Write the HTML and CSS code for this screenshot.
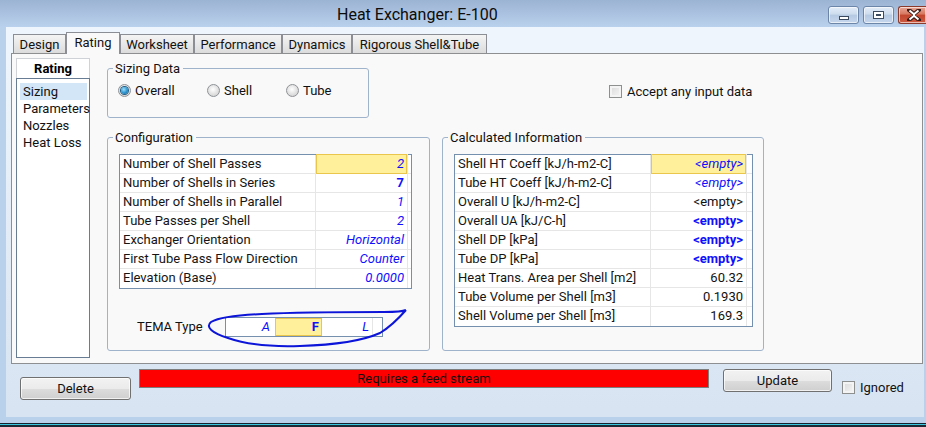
FILE: index.html
```html
<!DOCTYPE html>
<html>
<head>
<meta charset="utf-8">
<title>Heat Exchanger: E-100</title>
<link rel="stylesheet" href="styles.css">
</head>
<body>
<div class="window">
  <div class="titlebar">
    <div class="title">Heat Exchanger: E-100</div>
    <div class="controls">
      <div class="wbtn wmin"><span class="min-glyph"></span></div>
      <div class="wbtn wmax"><span class="max-glyph"></span></div>
      <div class="wbtn wclose">
        <svg width="14" height="12" viewBox="0 0 14 12"><path d="M2 1 L7 5 L12 1 M2 11 L7 7 L12 11 M7 5 L7 7" stroke="#3a1a14" stroke-width="4" fill="none" stroke-linecap="square"/><path d="M2.5 1.5 L7 5.3 L11.5 1.5 M2.5 10.5 L7 6.7 L11.5 10.5 M7 5 L7 7" stroke="#ffffff" stroke-width="2" fill="none"/></svg>
      </div>
    </div>
  </div>
  <div class="frame">
    <div class="client">
      <div class="tabs">
        <div class="tab t-design">Design</div>
        <div class="tab t-rating active">Rating</div>
        <div class="tab t-work">Worksheet</div>
        <div class="tab t-perf">Performance</div>
        <div class="tab t-dyn">Dynamics</div>
        <div class="tab t-rig">Rigorous Shell&amp;Tube</div>
      </div>
      <div class="panel">
        <div class="nav">
          <div class="nav-head">Rating</div>
          <div class="nav-list">
            <div class="nav-item active">Sizing</div>
            <div class="nav-item">Parameters</div>
            <div class="nav-item">Nozzles</div>
            <div class="nav-item">Heat Loss</div>
          </div>
        </div>
        <div class="main">
          <div class="row1">
            <fieldset class="group sizing">
              <legend>Sizing Data</legend>
              <div class="radios">
                <div class="radio r-overall"><span class="dot on"></span>Overall</div>
                <div class="radio r-shell"><span class="dot"></span>Shell</div>
                <div class="radio r-tube"><span class="dot"></span>Tube</div>
              </div>
            </fieldset>
            <div class="check accept"><span class="cbox"></span>Accept any input data</div>
          </div>
          <div class="row2">
            <fieldset class="group config">
              <legend>Configuration</legend>
              <div class="group-body">
                <div class="ptable cfg">
                  <div class="prow"><div class="lbl">Number of Shell Passes</div><div class="val sel it blue">2</div><div class="pad"></div></div>
                  <div class="prow"><div class="lbl">Number of Shells in Series</div><div class="val bold blue">7</div><div class="pad"></div></div>
                  <div class="prow"><div class="lbl">Number of Shells in Parallel</div><div class="val it blue">1</div><div class="pad"></div></div>
                  <div class="prow"><div class="lbl">Tube Passes per Shell</div><div class="val it blue">2</div><div class="pad"></div></div>
                  <div class="prow"><div class="lbl">Exchanger Orientation</div><div class="val it blue">Horizontal</div><div class="pad"></div></div>
                  <div class="prow"><div class="lbl">First Tube Pass Flow Direction</div><div class="val it blue">Counter</div><div class="pad"></div></div>
                  <div class="prow last"><div class="lbl">Elevation (Base)</div><div class="val it blue">0.0000</div><div class="pad"></div></div>
                </div>
                <div class="tema-row">
                  <div class="tema-label">TEMA Type</div>
                  <div class="tema-box">
                    <div class="tcell ta it blue">A</div>
                    <div class="tcell tf bold blue">F</div>
                    <div class="tcell tl it blue">L</div>
                    <div class="tcell tpad"></div>
                  </div>
                  <svg class="lasso" viewBox="200 304 215 48" width="215" height="48">
                    <path d="M406 310 C402 312 396 312 384 312 C350 312 300 312 262 314 C238 315 218 318 211 322 C205 327 212 333 228 338 C248 345 272 347 300 346 C335 345 362 341 380 333 C390 327 399 318 406 310" fill="none" stroke="#0b14d8" stroke-width="2" stroke-linejoin="round"/>
                  </svg>
                </div>
              </div>
            </fieldset>
            <fieldset class="group calc">
              <legend>Calculated Information</legend>
              <div class="group-body">
                <div class="ptable cal">
                  <div class="prow"><div class="lbl">Shell HT Coeff [kJ/h-m2-C]</div><div class="val sel it blue">&lt;empty&gt;</div><div class="pad"></div></div>
                  <div class="prow"><div class="lbl">Tube HT Coeff [kJ/h-m2-C]</div><div class="val it blue">&lt;empty&gt;</div><div class="pad"></div></div>
                  <div class="prow"><div class="lbl">Overall U [kJ/h-m2-C]</div><div class="val">&lt;empty&gt;</div><div class="pad"></div></div>
                  <div class="prow"><div class="lbl">Overall UA [kJ/C-h]</div><div class="val bold blue">&lt;empty&gt;</div><div class="pad"></div></div>
                  <div class="prow"><div class="lbl">Shell DP [kPa]</div><div class="val bold blue">&lt;empty&gt;</div><div class="pad"></div></div>
                  <div class="prow"><div class="lbl">Tube DP [kPa]</div><div class="val bold blue">&lt;empty&gt;</div><div class="pad"></div></div>
                  <div class="prow"><div class="lbl">Heat Trans. Area per Shell [m2]</div><div class="val">60.32</div><div class="pad"></div></div>
                  <div class="prow"><div class="lbl">Tube Volume per Shell [m3]</div><div class="val">0.1930</div><div class="pad"></div></div>
                  <div class="prow last"><div class="lbl">Shell Volume per Shell [m3]</div><div class="val">169.3</div><div class="pad"></div></div>
                </div>
              </div>
            </fieldset>
          </div>
        </div>
      </div>
      <div class="bottombar">
        <div class="btn delete">Delete</div>
        <div class="status">Requires a feed stream</div>
        <div class="btn update">Update</div>
        <div class="check ignored"><span class="cbox"></span>Ignored</div>
      </div>
    </div>
  </div>
  <div class="bottom-edge"></div>
</div>
</body>
</html>
```
FILE: styles.css
```css
* { box-sizing: border-box; }
html, body { margin: 0; padding: 0; }
body {
  width: 926px;
  height: 427px;
  overflow: hidden;
  background: #b9d1ea;
  font-family: Roboto, "Noto Sans", sans-serif;
  font-size: 13px;
  color: #111;
}
.window { display: flex; flex-direction: column; width: 926px; height: 427px; }

/* title bar */
.titlebar {
  height: 27px;
  flex: none;
  display: flex;
  align-items: flex-start;
  background: linear-gradient(#9cb4d3, #b9d1ec);
}
.title {
  padding-left: 337px;
  font-size: 16px;
  line-height: 30px;
  color: #0c0c0c;
  white-space: nowrap;
}
.controls { margin-left: auto; display: flex; gap: 4px; padding-top: 6px; }
.wbtn {
  width: 31px;
  height: 18px;
  border: 1px solid #6c86aa;
  border-radius: 3px;
  display: flex;
  align-items: center;
  justify-content: center;
  background: linear-gradient(#e4edf8 0%, #cddcee 45%, #b5c9e3 50%, #c6d7ec 100%);
  box-shadow: inset 0 0 0 1px rgba(255,255,255,0.6);
}
.min-glyph {
  width: 10px; height: 4px; margin-top: 5px;
  background: #fff; border: 1px solid #3b4a5e;
}
.max-glyph {
  width: 11px; height: 8px;
  border: 1px solid #3b4a5e;
  box-shadow: inset 0 0 0 2px #fff, inset 0 0 0 3px #3b4a5e;
  background: #c6d7ec;
}
.wclose {
  width: 28px;
  border-right: none;
  border-radius: 3px 0 0 3px;
  border-color: #8b3a2c;
  background: linear-gradient(#e7a698 0%, #d7775f 45%, #c2462e 50%, #cd5a40 100%);
  justify-content: flex-start;
  padding-left: 8px;
}

/* frame */
.frame { flex: none; height: 390px; display: flex; padding-left: 6px; }
.client {
  width: 918px;
  height: 390px;
  padding: 0 1px 0 5px;
  display: flex;
  flex-direction: column;
  background: linear-gradient(#eef5fc 0px, #eef5fc 30px, #d8e4f2 380px);
}
.bottom-edge {
  flex: 1;
  background: linear-gradient(#b9d1ea 0px, #b9d1ea 6px, #16232f 6px, #16232f 7px, #38c9e1 7px, #38c9e1 8px, #1c2a36 8px);
}

/* tabs */
.tabs { height: 26px; flex: none; display: flex; align-items: flex-end; padding-left: 2px; }
.tab {
  height: 19px;
  border: 1px solid #8b8e94;
  border-bottom: none;
  background: linear-gradient(#f4f4f4, #dcdcdc);
  text-align: center;
  line-height: 19px;
  white-space: nowrap;
  color: #111;
}
.tab.active {
  height: 22px;
  margin-bottom: -1px;
  position: relative;
  z-index: 1;
  background: #f9f9f9;
  line-height: 20px;
}
.t-design { width: 53px; }
.t-rating { width: 54px; }
.t-work { width: 74px; }
.t-perf { width: 88px; }
.t-dyn { width: 70px; }
.t-rig { width: 135px; }

/* panel */
.panel {
  height: 311px;
  flex: none;
  border: 1px solid #8e8f90;
  background: #f9f9f9;
  padding: 4px 0 0 4px;
  display: flex;
  align-items: flex-start;
}
.nav { width: 74px; height: 300px; display: flex; flex-direction: column; }
.nav-head {
  height: 20px;
  border: 1px solid #cfd3d8;
  border-bottom: none;
  background: #fff;
  text-align: center;
  font-weight: bold;
  line-height: 20px;
  color: #000;
}
.nav-list {
  flex: 1;
  border: 1px solid #687d94;
  background: #fff;
  padding: 4px 2px 0 3px;
}
.nav-item { height: 17px; line-height: 17px; padding-left: 3px; color: #111; white-space: nowrap; }
.nav-item.active { background: #d2e6f8; }

.main { margin-left: 17px; display: flex; flex-direction: column; }
.row1 { display: flex; align-items: flex-start; margin-top: 2px; }
.row2 { display: flex; align-items: flex-start; margin-top: 11px; gap: 12px; }

fieldset.group {
  margin: 0;
  padding: 0;
  min-width: 0;
  border: 1px solid #9fb3cb;
  border-radius: 3px;
}
fieldset.group legend {
  margin-left: 5px;
  padding: 0 3px 0 2px;
  line-height: 17px;
  color: #111;
}
.sizing { width: 262px; }
.radios {
  height: 40px;
  padding: 5px 0 0 10px;
  display: grid;
  grid-template-columns: 89px 79px auto;
  align-items: start;
}
.radio { display: flex; align-items: center; height: 17px; line-height: 17px; }
.dot {
  width: 13px; height: 13px;
  border-radius: 50%;
  border: 1px solid #8f9296;
  background: radial-gradient(circle at 45% 40%, #ffffff 0%, #e6e6e6 45%, #c9c9c9 100%);
  margin-right: 4px;
  flex: none;
  display: flex;
  align-items: center;
  justify-content: center;
}
.dot.on::after {
  content: "";
  width: 7px; height: 7px;
  border-radius: 50%;
  background: radial-gradient(circle at 40% 35%, #9fe0fb 0%, #2b93cf 55%, #145a8a 100%);
  box-shadow: 0 0 0 1px #1f5d86;
}

.check { display: flex; align-items: center; height: 17px; line-height: 17px; white-space: nowrap; color: #111; }
.cbox {
  width: 13px; height: 13px;
  border: 1px solid #8e8f8f;
  background: linear-gradient(135deg, #d9d9d9, #f7f7f7);
  box-shadow: inset 0 0 0 2px #f4f4f4;
  margin-right: 5px;
  flex: none;
}
.accept { margin-left: 240px; margin-top: 23px; }

.config { width: 323px; }
.calc { width: 322px; }
.group-body { height: 204px; padding: 8px 0 0 11px; }

.ptable { border: 1px solid #7590af; background: #fff; }
.cfg { width: 293px; }
.cal { width: 299px; }
.prow { display: flex; height: 19px; border-bottom: 1px solid #e6e6e6; }
.prow.last { border-bottom: none; height: 19px; }
.lbl {
  border-right: 1px solid #e6e6e6;
  padding-left: 3px;
  line-height: 18px;
  white-space: nowrap;
  color: #151515;
}
.cfg .lbl { width: 196px; }
.cal .lbl { width: 196px; }
.val {
  text-align: right;
  padding-right: 3px;
  line-height: 18px;
  border-right: 1px solid #e6e6e6;
  white-space: nowrap;
  color: #111;
}
.cfg .val { width: 92px; }
.cal .val { width: 96px; }
.pad { flex: 1; }
.val.sel {
  background: #fff09c;
  box-shadow: inset 0 0 0 1px #ebc64c;
  height: 20px;
  margin-top: -1px;
  margin-bottom: -1px;
  line-height: 20px;
  position: relative;
}
.blue { color: #1010ff; }
.it { font-style: italic; }
.bold { font-weight: bold; }

.tema-row {
  position: relative;
  display: flex;
  align-items: center;
  height: 20px;
  margin-top: 28px;
  padding-left: 18px;
}
.tema-label { width: 88px; line-height: 20px; color: #111; }
.tema-box {
  display: flex;
  width: 158px;
  height: 20px;
  border: 1px solid #7590af;
  background: #fff;
}
.tcell { text-align: right; line-height: 18px; padding-right: 5px; }
.ta { width: 49px; }
.tf { width: 47px; padding-right: 3px; background: #fff09c; box-shadow: inset 0 0 0 1px #ebc64c; }
.tl { width: 51px; border-right: 1px solid #e6e6e6; padding-right: 3px; }
.tpad { flex: 1; }
.lasso { position: absolute; left: 81px; top: -13px; overflow: visible; pointer-events: none; }

/* bottom bar */
.bottombar { height: 53px; flex: none; display: flex; align-items: flex-start; padding-left: 9px; }
.btn {
  height: 23px;
  border: 1px solid #707070;
  border-radius: 3px;
  background: linear-gradient(#f2f2f2 0%, #ebebeb 50%, #dddddd 51%, #cfcfcf 100%);
  box-shadow: inset 0 0 0 1px rgba(255,255,255,0.7);
  text-align: center;
  line-height: 21px;
  color: #111;
}
.delete { width: 111px; margin-top: 13px; }
.status {
  width: 570px;
  height: 19px;
  margin-left: 8px;
  margin-top: 5px;
  background: #ff0000;
  border: 1px solid #7d7d7d;
  text-align: center;
  line-height: 17px;
  color: #111;
}
.update { width: 109px; margin-left: 14px; margin-top: 5px; }
.ignored { margin-left: 10px; margin-top: 15px; }
```
